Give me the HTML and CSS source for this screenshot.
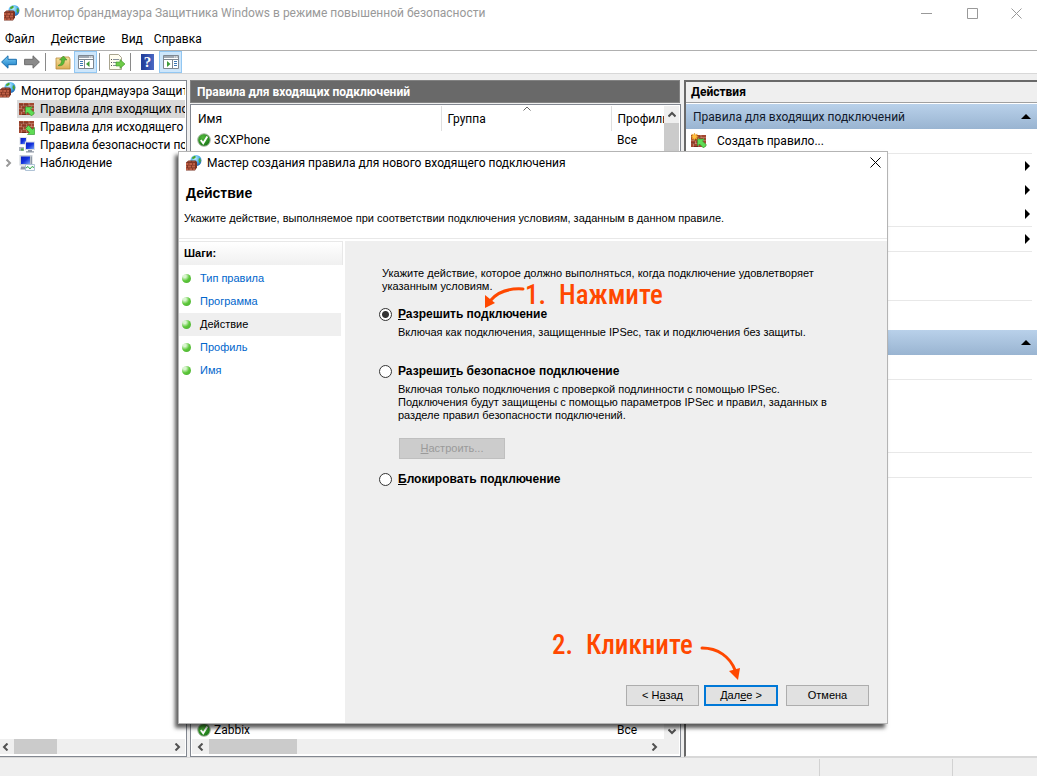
FILE: index.html
```html
<!DOCTYPE html>
<html lang="ru">
<head>
<meta charset="utf-8">
<title>Монитор брандмауэра Защитника Windows</title>
<link rel="stylesheet" href="styles.css">
</head>
<body>
<svg class="sprite" aria-hidden="true">
  <defs>
    <linearGradient id="gold" x1="0" y1="0" x2="0" y2="1"><stop offset="0" stop-color="#f8e3a0"/><stop offset="1" stop-color="#dcae55"/></linearGradient>
    <linearGradient id="blueArrow" x1="0" y1="0" x2="0" y2="1"><stop offset="0" stop-color="#7fd0f7"/><stop offset="1" stop-color="#1579c4"/></linearGradient>
    <linearGradient id="screen" x1="0" y1="0" x2="1" y2="1"><stop offset="0" stop-color="#0c1fc0"/><stop offset=".5" stop-color="#1433dd"/><stop offset="1" stop-color="#7ba4f5"/></linearGradient>
    <radialGradient id="globeFill" cx=".4" cy=".3" r=".8"><stop offset="0" stop-color="#c8f2ff"/><stop offset=".5" stop-color="#4fb2ee"/><stop offset="1" stop-color="#1553a4"/></radialGradient>
    <radialGradient id="okFill" cx=".4" cy=".3" r=".8"><stop offset="0" stop-color="#52b83c"/><stop offset="1" stop-color="#0f6d10"/></radialGradient>
  </defs>
  <symbol id="firewall" viewBox="0 0 16 16">
    <circle cx="10" cy="5.500" r="5.500" fill="url(#globeFill)"/>
    <path d="M6 2.500 8.500.8l1.500 1-1 1.500-2.500 1zM13 3l1.500 1 .3 2.500-1.300 1.500-1-2.500z" fill="#4aa52e"/>
    <path d="M0 7.500 2.500 5.500H9.500l1.500 1.500v5.500L9 15.500H0z" fill="#7a3222"/>
    <path d="M0 8h2.500v1.900H0zM3.300 8h3v1.900h-3zM7.100 8H9v1.900H7.100zM0 10.600h1.200v1.900H0zM2 10.600h3v1.900H2zM5.800 10.600H9v1.900H5.800zM0 13.200h2.500v1.900H0zM3.300 13.200h3v1.900h-3zM7.100 13.200H9v1.900H7.100z" fill="#bf5f45"/>
    <path d="M2.500 6h3L4.500 7.300H1.200zM6.500 6h3L8.500 7.300H5.500z" fill="#9a4a37"/>
  </symbol>
  <symbol id="bricks" viewBox="0 0 16 16">
    <path d="M0 2h15v12H0z" fill="#cf9f8c"/>
    <path d="M0 2h4v2.500H0zM4.600 2h5v2.500h-5zM10.300 2H15v2.500h-4.700zM0 5h2v2.500H0zM2.600 5h4.800v2.500H2.600zM8 5h4.500v2.500H8zM13 5h2v2.500h-2zM0 8h4v2.500H0zM4.600 8h5v2.500h-5zM10.300 8H15v2.500h-4.700zM0 11h2v3H0zM2.600 11h4.800v3H2.600zM8 11h4.500v3H8z" fill="#a34730"/>
    <path d="M0 3.500h4v1H0zM4.600 3.500h5v1h-5zM2.600 6.500h4.800v1H2.600zM0 9.500h4v1H0zM2.600 13h4.800v1H2.600z" fill="#702c1d"/>
  </symbol>
  <symbol id="rule-in" viewBox="0 0 16 16"><use href="#bricks"/><path d="M6.500 6h7l-2 2 4 4-3 3-4-4-2 2z" fill="#5fdc55" stroke="#2a9126" stroke-width=".6"/></symbol>
  <symbol id="rule-out" viewBox="0 0 16 16"><use href="#bricks"/><path d="M15.500 15.500h-7l2-2-4-4 3-3 4 4 2-2z" fill="#5fdc55" stroke="#2a9126" stroke-width=".6"/></symbol>
  <symbol id="rule-new" viewBox="0 0 16 16"><use href="#rule-in"/><path d="m3.500 0 .8 2 2-1-.8 2 2 .8-2 .8.800 2-2-1-.8 2-.8-2-2 1 .8-2-1.500-.8 1.500-.8-.8-2 2 1z" fill="#ffbe3d" stroke="#d98312" stroke-width=".4"/></symbol>
  <symbol id="network" viewBox="0 0 16 16">
    <path d="M.5 0H8v8H.5z" fill="#dfe3e8"/><path d="M1.500 1H7v6H1.500z" fill="url(#screen)"/>
    <path d="M0 10h5v4H0z" fill="#aab1ba"/><path d="M2 11.500h2.500v2H2z" fill="#4aa83f"/>
    <path d="M6 4.500h10V13H6z" fill="#d8dde4"/><path d="M7 5.500h8V12H7z" fill="url(#screen)"/>
    <path d="M9 13h4v1.200h2V15.500H7v-1.300h2z" fill="#8f98a5"/>
  </symbol>
  <symbol id="monitoring" viewBox="0 0 16 16">
    <path d="M.5 0h13v10.500H.5z" fill="#c9ced5"/><path d="M2 1.500h9v7.500H2z" fill="url(#screen)"/><path d="M11.700 1.500h1.300v7.500h-1.300z" fill="#8e98a6"/>
    <path d="M2 11.500h5v3H1.500z" fill="#8f98a5"/><path d="M6.500 9.500h9v6h-9z" fill="#f7fbff" stroke="#9db4cb" stroke-width=".8"/>
    <path d="m7 13 2-1.500 2 2.500 2-2.500 2 1" fill="none" stroke="#36a944"/>
  </symbol>
  <symbol id="ok" viewBox="0 0 14 14"><circle cx="7" cy="7" r="6.300" fill="url(#okFill)" stroke="#b4bdb0"/><path d="m3.800 7 2.400 3.200L10.300 3.500" fill="none" stroke="#fff" stroke-width="1.900"/></symbol>
  <symbol id="arrow-left" viewBox="0 0 16 14"><path d="M.6 7 7 .8v3.500h8.400v5.400H7v3.500z"/></symbol>
  <symbol id="arrow-right" viewBox="0 0 16 14"><path d="M15.400 7 9 .8v3.500H.6v5.400H9v3.500z"/></symbol>
  <symbol id="folder-up" viewBox="0 0 16 16"><path d="M1 4h5l1-1h7l1 2v10H1z" fill="url(#gold)" stroke="#b98c3d" stroke-width=".8"/><path d="M3 11.500c3-1 3.500-3 3.500-5.500H4.500L8.500 2 12 6H9.500c0 4-2 6.500-6.500 5.500z" fill="#58b837" stroke="#398322" stroke-width=".5"/></symbol>
  <symbol id="pane-left" viewBox="0 0 16 16"><path d="M.5 1.500h15v13H.5z" fill="#fff" stroke="#7e8791"/><path d="M1 2h14v2H1z" fill="#a0a8b1"/><path d="M11 2.500h1.500v1H11zM13 2.500h1.500v1H13z" fill="#fff"/><path d="M1 5.500h14M6.500 6v8" stroke="#7e8791"/><path d="M2 7.500h3M2 9.500h3M2 11.500h3" stroke="#3d78b4"/><path d="M11.500 7v6L8 10z" fill="#3d9c38"/></symbol>
  <symbol id="pane-right" viewBox="0 0 16 16"><path d="M.5 1.500h15v13H.5z" fill="#fff" stroke="#7e8791"/><path d="M1 2h14v2H1z" fill="#a0a8b1"/><path d="M11 2.500h1.500v1H11zM13 2.500h1.500v1H13z" fill="#fff"/><path d="M1 5.500h14M9.500 6v8" stroke="#7e8791"/><path d="M11 7.500h3M11 9.500h3M11 11.500h3" stroke="#3d78b4"/><path d="M4 7v6l3.500-3z" fill="#3d9c38"/></symbol>
  <symbol id="export" viewBox="0 0 16 16"><path d="M.5.500h9l3 3v12H.5z" fill="#fffdf0" stroke="#a9a48f"/><path d="M2 5.500h1M2 8.500h1M2 11.500h1" stroke="#555"/><path d="M4 5.500h6M4 8.500h5M4 11.500h5" stroke="#87909b"/><path d="M7 8h4V5.500l5 4.500-5 4.500V12H7z" fill="#6fcb48" stroke="#3b9427" stroke-width=".6"/></symbol>
  <symbol id="chev-left" viewBox="0 0 8 8"><path d="M5.500.5 2 4l3.500 3.500"/></symbol>
  <symbol id="chev-right" viewBox="0 0 8 8"><path d="M2.500.5 6 4 2.500 7.500"/></symbol>
  <symbol id="chev-up" viewBox="0 0 8 8"><path d="M.5 5.500 4 2l3.500 3.500"/></symbol>
  <symbol id="chev-down" viewBox="0 0 8 8"><path d="M.5 2.500 4 6l3.500-3.500"/></symbol>
  <symbol id="cross" viewBox="0 0 11 11"><path d="m.5.500 10 10m0-10-10 10" fill="none" stroke="currentColor"/></symbol>
</svg>

<div class="app">
  <header class="titlebar">
    <svg class="icon"><use href="#firewall"/></svg>
    <h1 class="titlebar-text">Монитор брандмауэра Защитника Windows в режиме повышенной безопасности</h1>
    <div class="window-controls">
      <button class="window-button" aria-label="Свернуть"><svg class="glyph" viewBox="0 0 11 11"><path d="M0 5.500h11" stroke="currentColor"/></svg></button>
      <button class="window-button" aria-label="Развернуть"><svg class="glyph" viewBox="0 0 11 11"><path d="M.5.500h10v10H.5z" fill="none" stroke="currentColor"/></svg></button>
      <button class="window-button" aria-label="Закрыть"><svg class="glyph"><use href="#cross"/></svg></button>
    </div>
  </header>

  <nav class="menubar">
    <button class="menu-item">Файл</button>
    <button class="menu-item">Действие</button>
    <button class="menu-item">Вид</button>
    <button class="menu-item">Справка</button>
  </nav>

  <div class="toolbar">
    <button class="tool nav-tool" aria-label="Назад"><svg class="icon"><use href="#arrow-left" fill="url(#blueArrow)" stroke="#1b6fae"/></svg></button>
    <button class="tool" aria-label="Вперёд"><svg class="icon"><use href="#arrow-right" fill="#8a8a8a" stroke="#6d6d6d"/></svg></button>
    <span class="tool-separator"></span>
    <button class="tool" aria-label="Вверх"><svg class="icon"><use href="#folder-up"/></svg></button>
    <button class="tool is-on" aria-label="Дерево консоли"><svg class="icon"><use href="#pane-left"/></svg></button>
    <span class="tool-separator"></span>
    <button class="tool" aria-label="Экспорт списка"><svg class="icon"><use href="#export"/></svg></button>
    <span class="tool-separator"></span>
    <button class="tool" aria-label="Справка"><span class="help-mark">?</span></button>
    <button class="tool is-on" aria-label="Панель действий"><svg class="icon"><use href="#pane-right"/></svg></button>
  </div>

  <main class="workspace">
    <section class="tree-pane">
      <ul class="tree">
        <li class="tree-row tree-root"><svg class="icon"><use href="#firewall"/></svg><span>Монитор брандмауэра Защитника Windows</span></li>
        <li class="tree-row"><span class="tree-item is-selected"><svg class="icon"><use href="#rule-in"/></svg><span>Правила для входящих подключений</span></span></li>
        <li class="tree-row"><span class="tree-item"><svg class="icon"><use href="#rule-out"/></svg><span>Правила для исходящего подключения</span></span></li>
        <li class="tree-row"><span class="tree-item"><svg class="icon"><use href="#network"/></svg><span>Правила безопасности подключения</span></span></li>
        <li class="tree-row has-expander"><svg class="expander"><use href="#chev-right"/></svg><span class="tree-item"><svg class="icon"><use href="#monitoring"/></svg><span>Наблюдение</span></span></li>
      </ul>
      <div class="hscroll"><button class="scroll-button" aria-label="Влево"><svg class="chevron"><use href="#chev-left"/></svg></button><span class="hthumb hthumb-tree"></span><button class="scroll-button scroll-end" aria-label="Вправо"><svg class="chevron"><use href="#chev-right"/></svg></button></div>
    </section>

    <section class="rules-pane">
      <h2 class="rules-heading">Правила для входящих подключений</h2>
      <div class="rules-list">
        <div class="rules-body">
          <div class="table-wrap">
            <table class="rules-table">
              <colgroup><col><col class="col-group"><col class="col-profile"></colgroup>
              <thead><tr><th>Имя</th><th>Группа<svg class="sort-mark"><use href="#chev-up"/></svg></th><th>Профиль</th></tr></thead>
              <tbody>
                <tr><td><svg class="ok-icon"><use href="#ok"/></svg>3CXPhone</td><td></td><td>Все</td></tr>
                <tr class="filler"><td colspan="3"></td></tr>
                <tr><td><svg class="ok-icon"><use href="#ok"/></svg>Zabbix</td><td></td><td>Все</td></tr>
              </tbody>
            </table>
          </div>
          <div class="vscroll"><button class="scroll-button" aria-label="Вверх"><svg class="chevron"><use href="#chev-up"/></svg></button><span class="vthumb"></span><button class="scroll-button scroll-bottom" aria-label="Вниз"><svg class="chevron"><use href="#chev-down"/></svg></button></div>
        </div>
        <div class="hscroll hscroll-list"><button class="scroll-button" aria-label="Влево"><svg class="chevron"><use href="#chev-left"/></svg></button><span class="hthumb hthumb-list"></span><button class="scroll-button scroll-end" aria-label="Вправо"><svg class="chevron"><use href="#chev-right"/></svg></button></div>
      </div>
    </section>

    <aside class="actions-pane">
      <h2 class="actions-heading">Действия</h2>
      <div class="actions-section">
        <h3 class="section-bar"><span>Правила для входящих подключений</span><span class="collapse"></span></h3>
        <button class="action-row"><svg class="icon"><use href="#rule-new"/></svg><span>Создать правило...</span></button>
        <div class="action-group">
          <div class="action-row"><span class="submenu"></span></div>
          <div class="action-row"><span class="submenu"></span></div>
          <div class="action-row"><span class="submenu"></span></div>
        </div>
        <div class="action-group"><div class="action-row"><span class="submenu"></span></div></div>
        <div class="action-group"><div class="action-row"></div><div class="action-row"></div></div>
        <div class="action-group"><div class="action-row"></div></div>
      </div>
      <div class="actions-section">
        <h3 class="section-bar"><span></span><span class="collapse"></span></h3>
        <div class="action-row"></div>
        <div class="action-group"><div class="action-row"></div><div class="action-row"></div><div class="action-row"></div></div>
        <div class="action-group"><div class="action-row"></div></div>
        <div class="action-group"></div>
      </div>
    </aside>
  </main>

  <footer class="statusbar"><span class="status-main"></span><span class="status-cell"></span><span class="status-last"></span></footer>

  <div class="wizard" role="dialog" aria-labelledby="wizard-title">
    <header class="wizard-titlebar">
      <svg class="icon"><use href="#firewall"/></svg>
      <span id="wizard-title">Мастер создания правила для нового входящего подключения</span>
      <button class="wizard-close" aria-label="Закрыть"><svg class="glyph"><use href="#cross"/></svg></button>
    </header>
    <div class="wizard-intro">
      <h2 class="wizard-heading">Действие</h2>
      <p class="wizard-lead">Укажите действие, выполняемое при соответствии подключения условиям, заданным в данном правиле.</p>
    </div>
    <div class="wizard-main">
      <nav class="steps">
        <h3 class="steps-heading">Шаги:</h3>
        <a class="step" href="#type">Тип правила</a>
        <a class="step" href="#program">Программа</a>
        <a class="step is-current" href="#action">Действие</a>
        <a class="step" href="#profile">Профиль</a>
        <a class="step" href="#name">Имя</a>
      </nav>
      <form class="choices">
        <p class="prompt">Укажите действие, которое должно выполняться, когда подключение удовлетворяет<br>указанным условиям.</p>
        <div class="choice">
          <input class="radio" type="radio" name="action" id="allow" checked>
          <label class="choice-label" for="allow"><u>Р</u>азрешить подключение</label>
          <p class="choice-text">Включая как подключения, защищенные IPSec, так и подключения без защиты.</p>
        </div>
        <div class="choice choice-secure">
          <input class="radio" type="radio" name="action" id="secure">
          <label class="choice-label" for="secure">Разреши<u>т</u>ь безопасное подключение</label>
          <p class="choice-text">Включая только подключения с проверкой подлинности с помощью IPSec.<br>Подключения будут защищены с помощью параметров IPSec и правил, заданных в<br>разделе правил безопасности подключений.</p>
          <button class="push customize" type="button" disabled><span><u>Н</u>астроить...</span></button>
        </div>
        <div class="choice choice-block">
          <input class="radio" type="radio" name="action" id="block">
          <label class="choice-label" for="block"><u>Б</u>локировать подключение</label>
        </div>
        <div class="wizard-buttons">
          <button class="push" type="button"><span>&lt; Н<u>а</u>зад</span></button>
          <button class="push is-default" type="button"><span>Дал<u>е</u>е &gt;</span></button>
          <button class="push cancel" type="button"><span>Отмена</span></button>
        </div>
      </form>
    </div>
    <div class="note note-press">
      <svg class="note-arrow" viewBox="0 0 42 24"><path d="M40 3C24 2 14 7 8 14" fill="none" stroke="#ff4800" stroke-width="3" stroke-linecap="round"/><path d="M2 22 2 9l10 8z" fill="#ff4800"/></svg>
      <span class="note-number">1.</span><span>Нажмите</span>
    </div>
    <div class="note note-click">
      <span class="note-number">2.</span><span class="note-word">Кликните</span>
      <svg class="note-arrow-down" viewBox="0 0 42 36"><path d="M2 3c16 0 28 9 33 22" fill="none" stroke="#ff4800" stroke-width="3" stroke-linecap="round"/><path d="m38 35-9-9 11-3z" fill="#ff4800"/></svg>
    </div>
  </div>
</div>
</body>
</html>
```
FILE: styles.css
```css
* { box-sizing: border-box; }
body { margin: 0; background: #efefef; color: #000; font: 12px/18px Roboto, "Noto Sans", sans-serif; }
h1, h2, h3, p, ul { margin: 0; padding: 0; font-size: inherit; font-weight: inherit; }
button { margin: 0; padding: 0; border: 0; background: none; color: inherit; font: inherit; }
svg { display: block; flex: none; }
.sprite { position: absolute; width: 0; height: 0; }
.icon { width: 16px; height: 16px; }
.glyph { width: 11px; height: 11px; }
.chevron { width: 8px; height: 8px; fill: none; stroke: #505050; stroke-width: 2; }

.app { position: relative; display: flex; flex-direction: column; min-height: 100vh; }

.titlebar { display: flex; align-items: center; height: 26px; padding-left: 4px; background: #fff; color: #999; }
.titlebar-text { flex: 1; min-width: 0; padding-left: 4px; white-space: nowrap; }
.window-controls { display: flex; }
.window-button { display: flex; align-items: center; justify-content: center; width: 46px; height: 26px; }
.window-button:last-child { width: 42px; }

.menubar { display: flex; gap: 16px; height: 25px; padding-left: 5px; background: #fff; border-bottom: 1px solid #b0b0b0; }
.menu-item { height: 24px; padding-top: 1px; }
.menu-item:last-child { margin-left: -5px; }

.toolbar { display: flex; align-items: center; height: 23px; background: #fff; border-bottom: 1px solid #d8d8d8; }
.tool { display: flex; align-items: center; justify-content: center; width: 23px; height: 22px; }
.nav-tool { width: 17px; margin-right: 3px; }
.tool.is-on { border: 1px solid #92c7f2; background: #cde6fb; }
.tool-separator { width: 1px; height: 18px; margin: 0 5px 0 2px; background: #8a8a8a; }
.help-mark { width: 13px; height: 16px; background: linear-gradient(90deg, #24409c 0 2px, #4a68c4); color: #fff; font: bold 15px/16px "Liberation Serif", serif; }

.workspace { flex: 1; display: grid; grid-template-columns: 187px minmax(0, 491fr) minmax(0, 353fr); gap: 3px; padding-top: 6px; }
.tree-pane, .rules-list { display: flex; flex-direction: column; min-width: 0; background: #fff; border: 1px solid #828790; }
.tree-pane { border-left: 0; padding: 1px 1px 2px 0; }

.tree { flex: 1; list-style: none; overflow: hidden; }
.tree-row { display: flex; height: 18px; padding-left: 17px; white-space: nowrap; overflow: hidden; }
.tree-root { gap: 5px; padding-left: 0; }
.has-expander { padding-left: 4px; }
.expander { width: 8px; height: 8px; margin: 5px 5px 0 0; fill: none; stroke: #999; stroke-width: 2; }
.tree-item { flex: 1; display: flex; gap: 5px; padding: 0 2px; overflow: hidden; }
.tree-item.is-selected { background: #d9d9d9; }
.tree-item .icon { margin-top: 1px; }

.hscroll { display: flex; align-items: center; height: 15px; background: #efefef; }
.hthumb { height: 15px; background: #cbcbcb; }
.hthumb-tree { width: 43px; margin-left: 3px; }
.hthumb-list { width: 88px; }
.scroll-button { display: flex; align-items: center; justify-content: center; width: 17px; height: 15px; }
.hscroll:not(.hscroll-list) .scroll-button:first-child { width: 11px; }
.scroll-end { margin-left: auto; }
.hscroll-list { padding-right: 17px; }

.rules-pane { display: flex; flex-direction: column; min-width: 0; }
.rules-heading { height: 23px; margin-right: 1px; padding-left: 6px; background: #696969; border: 1px solid #828282; color: #fff; font-weight: bold; line-height: 22px; }
.rules-list { flex: 1; margin-top: 1px; padding: 1px 1px 2px; }
.rules-body { flex: 1; display: flex; }
.table-wrap { flex: 1; display: flex; min-width: 0; overflow: hidden; }
.rules-table { flex: 1; table-layout: fixed; width: 100%; border-collapse: collapse; }
.rules-table col.col-group { width: 170px; }
.rules-table col.col-profile { width: 53px; }
.rules-table th { position: relative; height: 25px; padding: 0 0 0 6px; border-right: 1px solid #e0e0e0; font-weight: normal; text-align: left; overflow: hidden; white-space: nowrap; }
.rules-table th:last-child { border-right: 0; }
.rules-table td { height: 18px; padding: 0 0 0 6px; white-space: nowrap; }
.rules-table .filler td { height: auto; }
.sort-mark { position: absolute; top: -1px; left: 48%; width: 8px; height: 8px; fill: none; stroke: #666; }
.ok-icon { display: inline-block; width: 14px; height: 14px; margin: 0 3px 0 -1px; vertical-align: -3px; }
.vscroll { display: flex; flex-direction: column; width: 15px; background: #efefef; }
.vscroll .scroll-button { width: 15px; height: 17px; }
.vthumb { height: 40px; background: #cbcbcb; }
.scroll-bottom { margin-top: auto; }

.actions-pane { background: #fff; border: solid #696969; border-width: 2px 0 0 2px; border-bottom: 1px solid #d8d8d8; }
.actions-heading { height: 21px; padding-left: 5px; background: #efefef; border-bottom: 1px solid #a0a0a0; font-weight: bold; line-height: 21px; }
.actions-section { padding-bottom: 5px; }
.section-bar { display: flex; align-items: center; justify-content: space-between; height: 25px; margin-top: 1px; padding: 0 6px 0 7px; background: linear-gradient(#b9d1ea, #99b4d1); color: #111a2c; }
.actions-section + .actions-section .section-bar { margin-top: 0; }
.collapse { border: solid transparent; border-width: 0 5px 5px; border-bottom-color: #000; }
.action-row { display: flex; align-items: center; gap: 10px; width: 100%; height: 24px; padding: 0 7px 0 5px; }
.action-group { margin-right: 5px; border-top: 1px solid #e8e8e8; }
.action-group .action-row { padding-right: 2px; }
.submenu { margin-left: auto; border: solid transparent; border-width: 5px 0 5px 5px; border-left-color: #000; }

.statusbar { display: flex; height: 19px; border-top: 1px solid #d8d8d8; }
.status-main { flex: 1; }
.status-cell { width: 134px; margin-top: 1px; border: solid #d2d2d2; border-width: 0 1px; }
.status-last { width: 84px; }

.wizard { position: absolute; top: 151px; right: 149px; bottom: 52px; left: 178px; display: flex; flex-direction: column; background: #fff; border: 1px solid #b4b4b4; box-shadow: -3px 4px 4px rgba(0, 0, 0, .65); font: 11px/13px "Liberation Sans", Arial, sans-serif; }
.wizard-titlebar { display: flex; align-items: center; gap: 5px; height: 21px; padding: 0 6px 0 7px; font: 12px/18px Roboto, "Noto Sans", sans-serif; }
.wizard-close { margin-left: auto; }
.wizard-intro { height: 66px; padding: 11px 6px 0 5px; border-bottom: 1px solid #e8e8e8; }
.wizard-heading { padding-left: 2px; font-size: 14px; font-weight: bold; line-height: 18px; }
.wizard-lead { padding-top: 10px; }
.wizard-main { flex: 1; display: flex; padding-top: 2px; }
.steps { width: 166px; padding-right: 2px; }
.steps-heading { height: 24px; margin-bottom: 2px; padding-left: 5px; background: linear-gradient(#fff, #f0f0f0); border: solid #e8e8e8; border-width: 1px 1px 0 0; font-weight: bold; line-height: 23px; }
.step { display: flex; align-items: center; gap: 9px; height: 23px; margin-right: 2px; padding-left: 3px; color: #0066cc; text-decoration: none; }
.step::before { content: ""; width: 9px; height: 9px; border-radius: 50%; background: radial-gradient(circle at 30% 25%, #d9f5cf 0 15%, #5dc83a 50%, #48a831); }
.step.is-current { background: #efefef; color: #000; }

.choices { flex: 1; display: flex; flex-direction: column; min-width: 0; padding: 26px 18px 17px 33px; background: #efefef; }
.prompt { padding: 0 0 14px 4px; white-space: nowrap; }
.choice { display: grid; grid-template-columns: 14px auto; justify-content: start; column-gap: 6px; align-items: center; }
.choice-secure { padding-top: 25px; }
.choice-block { padding-top: 13px; }
.radio { appearance: none; width: 13px; height: 13px; margin: 0 0 0 1px; border: 1px solid #333; border-radius: 50%; background: #fff; }
.radio:checked { background: radial-gradient(circle, #333 0 3px, #fff 4px); }
.choice-label { font-size: 12px; font-weight: bold; line-height: 14px; }
.choice-text { grid-column: 2; padding-top: 5px; white-space: nowrap; }
.push { min-width: 73px; height: 21px; background: #e1e1e1; border: 1px solid #adadad; }
.push.is-default { width: 74px; border: 2px solid #0078d7; }
.push.cancel { width: 83px; margin-left: 3px; }
.push.customize { grid-column: 2; width: 106px; margin: 16px 0 0 1px; background: #ccc; border-color: #bfbfbf; color: #9a9a9a; }
.wizard-buttons { display: flex; justify-content: flex-end; gap: 5px; margin-top: auto; }

.note { position: absolute; display: flex; align-items: center; height: 34px; color: #ff4800; font: 500 27px/34px "Roboto Condensed", Roboto, sans-serif; white-space: nowrap; pointer-events: none; }
.note-press { top: 126px; left: 304px; }
.note-click { top: 476px; left: 373px; }
.note-number { width: 34px; }
.note-word { width: 108px; }
.note-arrow { align-self: flex-start; width: 42px; height: 24px; margin-top: 8px; }
.note-arrow-down { align-self: flex-start; width: 42px; height: 36px; margin: 17px 0 0 6px; }
```
